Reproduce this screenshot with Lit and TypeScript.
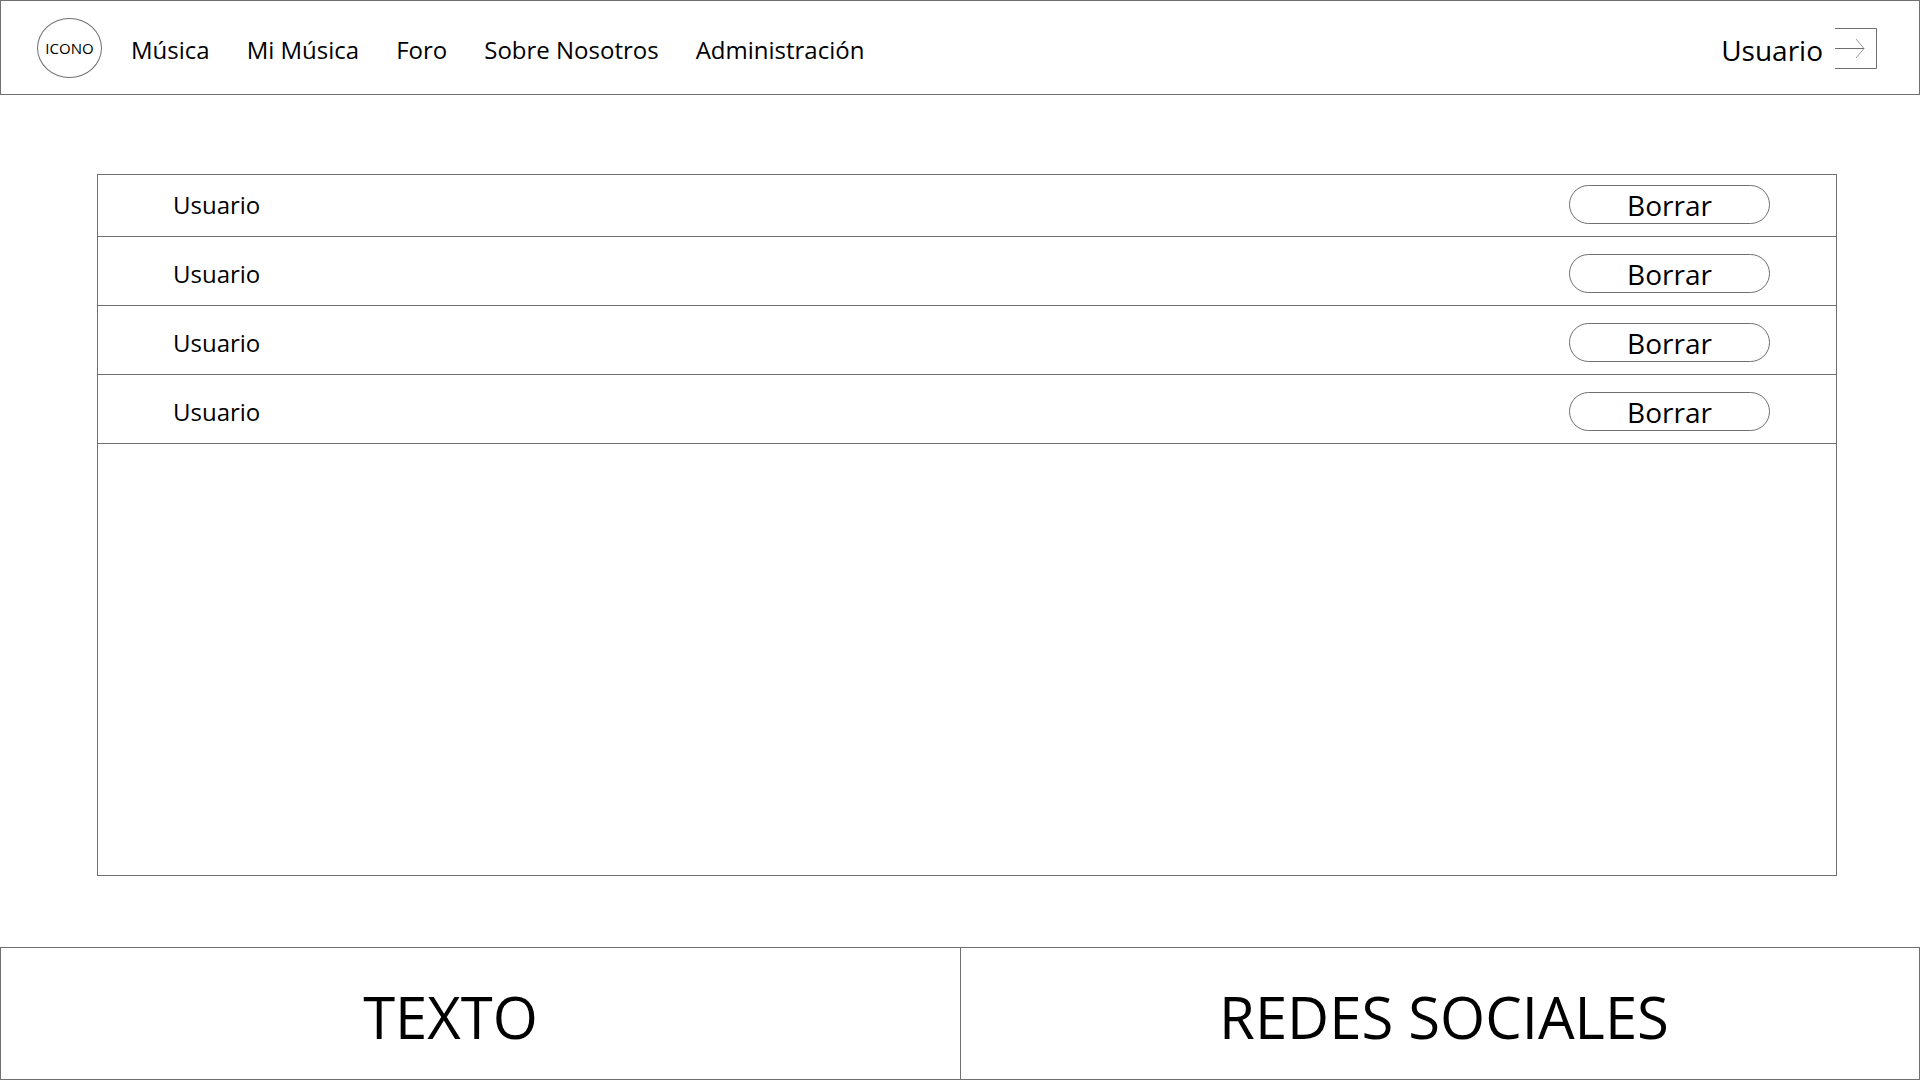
import { LitElement, html, css } from "lit";
import { customElement, state } from "lit/decorators.js";

const NAV_LINKS = ["Música", "Mi Música", "Foro", "Sobre Nosotros", "Administración"];

interface User {
  id: number;
  name: string;
}

@customElement("site-header")
export class SiteHeader extends LitElement {
  static styles = css`
    :host {
      display: block;
    }
    .bar {
      display: flex;
      align-items: center;
      justify-content: space-between;
      box-sizing: border-box;
      min-height: 95px;
      padding: 0 42px 0 36px;
      border: 1px solid #707070;
    }
    a {
      color: inherit;
      text-decoration: none;
    }
    .main {
      display: flex;
      align-items: center;
      gap: 29px;
    }
    .logo {
      display: flex;
      align-items: center;
      justify-content: center;
      box-sizing: border-box;
      width: 65px;
      height: 60px;
      border: 1px solid #707070;
      border-radius: 50%;
      font-size: 15px;
      line-height: 20px;
    }
    .links {
      display: flex;
      gap: 37px;
      margin: 0;
      padding: 4px 0 0;
      list-style: none;
      font-size: 24px;
      line-height: 32px;
      white-space: nowrap;
    }
    .account {
      display: flex;
      align-items: center;
      gap: 12px;
      font-size: 28px;
      line-height: 40px;
    }
    .user {
      padding-top: 4px;
    }
    .logout {
      display: flex;
      padding: 0;
      border: 0;
      background: none;
      cursor: pointer;
    }
    .exit {
      display: block;
      width: 42px;
      height: 42px;
      fill: none;
      stroke: #707070;
    }
  `;

  render() {
    return html`
      <header class="bar">
        <div class="main">
          <a class="logo" href="#">ICONO</a>
          <nav>
            <ul class="links">
              ${NAV_LINKS.map((label) => html`<li><a href="#">${label}</a></li>`)}
            </ul>
          </nav>
        </div>
        <div class="account">
          <a class="user" href="#">Usuario</a>
          <button class="logout" type="button" aria-label="Salir">
            <svg class="exit" viewBox="0 0 42 42" aria-hidden="true">
              <path d="M0 1.5H41.5V41.5H0M0 21.5H29" />
              <path d="M21 12L29 21.5L21 31" stroke-width="0.7" />
            </svg>
          </button>
        </div>
      </header>
    `;
  }
}

@customElement("user-list")
export class UserList extends LitElement {
  static styles = css`
    :host {
      display: flex;
      flex-direction: column;
    }
    .panel {
      flex: 1;
      margin: 0;
      padding: 0;
      border: 1px solid #707070;
      list-style: none;
    }
    .row {
      display: flex;
      align-items: center;
      justify-content: space-between;
      padding: 17px 66px 12px 75px;
      border-bottom: 1px solid #707070;
    }
    .row:first-child {
      padding-top: 10px;
    }
    .name {
      font-size: 24px;
      line-height: 32px;
    }
    .remove {
      box-sizing: border-box;
      width: 201px;
      height: 39px;
      padding: 2px 0 0;
      border: 1px solid #707070;
      border-radius: 20px;
      background: #fff;
      color: #000;
      font-family: inherit;
      font-size: 28px;
      line-height: 35px;
      cursor: pointer;
    }
  `;

  @state() private users: User[] = [1, 2, 3, 4].map((id) => ({ id, name: "Usuario" }));

  private remove(id: number) {
    this.users = this.users.filter((user) => user.id !== id);
  }

  render() {
    return html`
      <ul class="panel">
        ${this.users.map(
          (user) => html`
            <li class="row">
              <span class="name">${user.name}</span>
              <button class="remove" type="button" @click=${() => this.remove(user.id)}>
                Borrar
              </button>
            </li>
          `,
        )}
      </ul>
    `;
  }
}

@customElement("site-footer")
export class SiteFooter extends LitElement {
  static styles = css`
    :host {
      display: block;
    }
    .footer {
      display: grid;
      grid-template-columns: 1fr 1fr;
      border: 1px solid #707070;
      font-size: 58px;
      line-height: 80px;
      text-align: center;
    }
    .text {
      padding: 29px 60px 22px 0;
    }
    .social {
      padding: 29px 0 22px 8px;
      border-left: 1px solid #707070;
    }
  `;

  render() {
    return html`
      <footer class="footer">
        <div class="text">TEXTO</div>
        <div class="social">REDES SOCIALES</div>
      </footer>
    `;
  }
}

@customElement("app-root")
export class AppRoot extends LitElement {
  static styles = css`
    :host {
      display: flex;
      flex-direction: column;
      min-height: 100vh;
      background: #fff;
      color: #000;
      font-family: "Segoe UI", "Open Sans", "Noto Sans", sans-serif;
    }
    .content {
      display: flex;
      flex: 1;
      flex-direction: column;
      padding: 79px 83px 71px 97px;
    }
    .users {
      flex: 1;
    }
  `;

  render() {
    return html`
      <site-header></site-header>
      <main class="content">
        <user-list class="users"></user-list>
      </main>
      <site-footer></site-footer>
    `;
  }
}
